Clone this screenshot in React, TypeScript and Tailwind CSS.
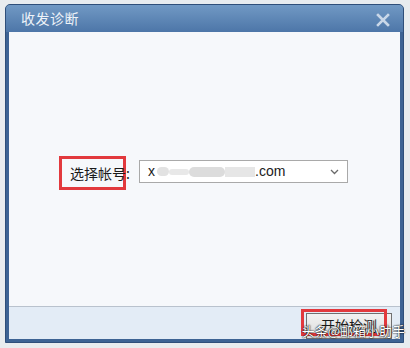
import React from 'react';

export default function App() {
  return (
    <div className="relative w-[410px] h-[348px] bg-[#e8ecef] pt-[4px] pl-[5px] pr-[6px] pb-[5px] font-['Microsoft_YaHei','Noto_Sans_CJK_SC',sans-serif]">
      <div className="w-full h-full flex flex-col bg-[#3d6394] rounded-t-[5px] border border-[#2f4f7a] overflow-hidden">
        {/* Title bar */}
        <div className="h-[27px] shrink-0 flex items-center justify-between pl-[15px] pr-[13px] bg-gradient-to-b from-[#7199c4] to-[#4d76a8]">
          <span className="text-[14px] text-[#eef3f9] tracking-[0.5px]">收发诊断</span>
          <svg width="14" height="14" viewBox="0 0 14 14" className="mt-[2px]">
            <path d="M2 2 L12 12 M12 2 L2 12" stroke="#c9d7e8" strokeWidth="2.6" strokeLinecap="square" />
          </svg>
        </div>

        {/* Body */}
        <div className="flex-1 mx-[3px] flex flex-col bg-[#f6f8fb]">
          <div className="flex-1 flex items-center pl-[50px] pt-[8px]">
            <div className="h-[34px] w-[67px] shrink-0 border-[3px] border-[#e2393d] flex items-center pl-[8px] text-[14px] text-[#1b1b1b] whitespace-nowrap">
              选择帐号:
            </div>
            <div className="ml-[13px] mt-[-3px] w-[209px] h-[23px] border border-[#a9a9a9] bg-white flex items-center pl-[8px] pr-[8px] text-[14px] text-[#1b1b1b] font-['Liberation_Sans',sans-serif]">
              <span>x</span>
              <span className="ml-[2px] w-[12px] h-[9px] rounded-full bg-[#e2e2e2]" />
              <span className="w-[20px] h-[6px] rounded-full bg-[#e8e8e8]" />
              <span className="w-[36px] h-[10px] rounded-full bg-[#dcdcdc]" />
              <span className="w-[30px] h-[10px] bg-[#e6e6e6]" />
              <span>.com</span>
              <svg width="9" height="6" viewBox="0 0 9 6" className="ml-auto">
                <path d="M1 1 L4.5 4.5 L8 1" stroke="#6a6a6a" strokeWidth="1.3" fill="none" />
              </svg>
            </div>
          </div>

          {/* Footer */}
          <div className="h-[33px] shrink-0 border-t border-[#b9c2cd] bg-[#e3ecf6] flex items-start justify-end pr-[8px] pt-[6px]">
            <div className="relative">
              <div className="w-[86px] h-[26px] border border-[#707070] bg-gradient-to-b from-[#f2f2f2] to-[#dcdcdc] flex items-start justify-center text-[14px] text-[#1b1b1b] pt-[1px]">
                开始检测
              </div>
              <div className="absolute left-[-5px] top-[-4px] w-[86px] h-[27px] border-[3px] border-[#e2393d]" />
            </div>
          </div>
        </div>
        <div className="h-[3px] shrink-0" />
      </div>

      {/* Watermark */}
      <span className="absolute right-[5px] bottom-[9px] text-[13px] leading-[16px] text-white [text-shadow:0_0_2px_#000,0_0_1px_#000]">
        头条@邮箱小助手
      </span>
    </div>
  );
}
